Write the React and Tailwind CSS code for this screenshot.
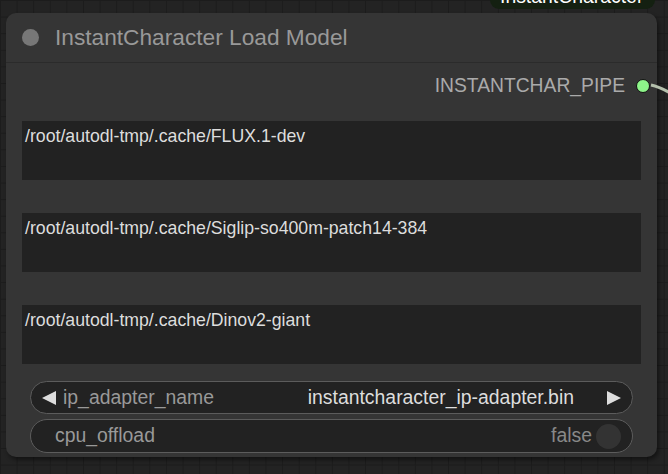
import React from "react";

const font = { fontFamily: '"Liberation Sans", Arial, sans-serif' };

function TextBox({ value }) {
  return (
    <div className="h-[59px] bg-[#222222] pl-[3px] pt-[4px] text-[17.7px] leading-[22px] text-[#dddddd]">
      {value}
    </div>
  );
}

export default function App() {
  return (
    <div
      className="relative h-[474px] w-[668px] overflow-hidden bg-[#232323] bg-[linear-gradient(to_right,#1c1c1c_1px,transparent_1px),linear-gradient(to_bottom,#1c1c1c_1px,transparent_1px)] bg-[size:16.6px_16.6px]"
      style={font}
    >
      {/* other node peeking at top */}
      <div className="absolute left-[490px] top-[-30px] flex h-[39px] w-[165px] items-end overflow-hidden rounded-b-[9px] bg-[#142011] pl-[10px]">
        <span className="mb-[2px] whitespace-nowrap text-[19.4px] leading-[22px] text-white">InstantCharacter</span>
      </div>

      <div className="pl-[6px] pt-[13px]">
        <div className="flex h-[444px] w-[651px] flex-col rounded-[10px] bg-[#353535] shadow-[2px_3px_4px_rgba(0,0,0,0.45)]">
          {/* title */}
          <div className="flex h-[50px] shrink-0 items-center border-b border-[#2b2b2b] pl-[16px]">
            <div className="h-[17px] w-[17px] rounded-full bg-[#777777]" />
            <div className="ml-[16px] text-[22.7px] text-[#999999]">InstantCharacter Load Model</div>
          </div>

          {/* output */}
          <div className="flex h-[46px] shrink-0 items-center justify-end pr-[7px]">
            <span className="text-[19.3px] text-[#aaaaaa]">INSTANTCHAR_PIPE</span>
            <div className="ml-[11px] h-[14px] w-[14px] rounded-full border-[1.5px] border-[#111] bg-[#8ef58a]" />
          </div>

          {/* text boxes */}
          <div className="mt-[12px] flex flex-col gap-[33px] px-[16px]">
            <TextBox value="/root/autodl-tmp/.cache/FLUX.1-dev" />
            <TextBox value="/root/autodl-tmp/.cache/Siglip-so400m-patch14-384" />
            <TextBox value="/root/autodl-tmp/.cache/Dinov2-giant" />
          </div>

          {/* widgets */}
          <div className="mt-[17px] flex flex-col gap-[5px] px-[24px]">
            <div className="flex h-[33px] items-center rounded-full border-[1.5px] border-[#5c5c5c] bg-[#222222] pl-[10px] pr-[10px] text-[19.4px]">
              <svg width="16" height="16" viewBox="0 0 16 16" className="shrink-0">
                <path d="M1 8 L15 1 L15 15 Z" fill="#dddddd" />
              </svg>
              <span className="ml-[6px] text-[#999999]">ip_adapter_name</span>
              <span className="ml-auto mr-[32px] text-[#dddddd]">instantcharacter_ip-adapter.bin</span>
              <svg width="16" height="16" viewBox="0 0 16 16" className="shrink-0">
                <path d="M15 8 L1 1 L1 15 Z" fill="#dddddd" />
              </svg>
            </div>
            <div className="flex h-[34px] items-center rounded-full border-[1.5px] border-[#5c5c5c] bg-[#222222] pl-[24px] pr-[11px] text-[19.4px]">
              <span className="text-[#999999]">cpu_offload</span>
              <span className="ml-auto mr-[4px] text-[#888888]">false</span>
              <div className="h-[25px] w-[25px] rounded-full bg-[#333333]" />
            </div>
          </div>
        </div>
      </div>

      {/* link line */}
      <svg className="absolute left-0 top-0" width="668" height="474">
        <path d="M651 85 Q660 87 672 94" stroke="#b4c0ac" strokeWidth="3" fill="none" />
      </svg>
    </div>
  );
}
